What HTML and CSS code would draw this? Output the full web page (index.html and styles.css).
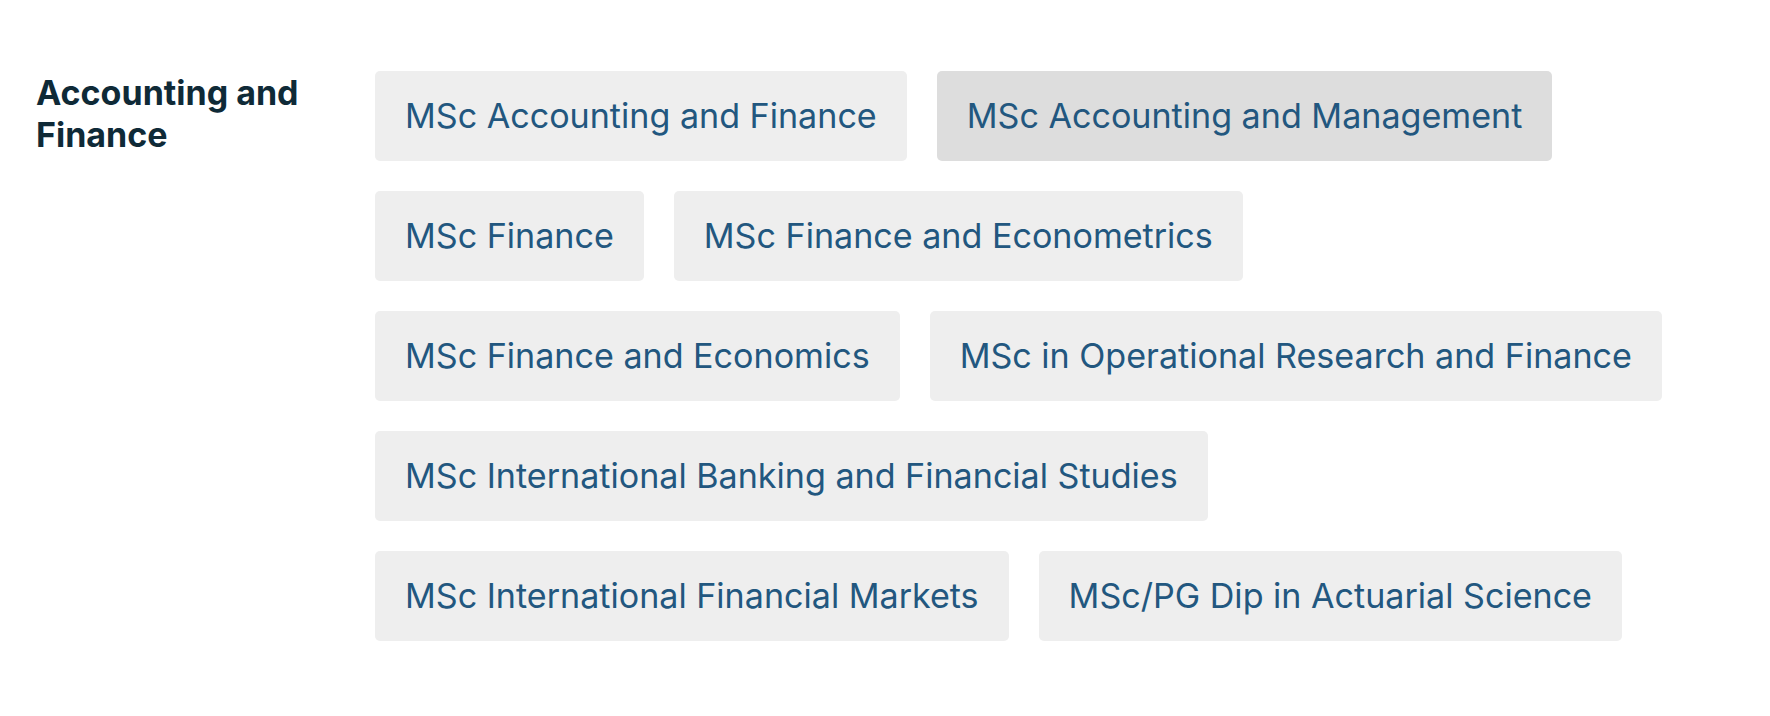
FILE: index.html
```html
<!DOCTYPE html>
<html lang="en">
<head>
<meta charset="utf-8">
<title>Accounting and Finance</title>
<link rel="stylesheet" href="styles.css">
</head>
<body>
<section class="subject">
  <h2 class="subject-title">Accounting and Finance</h2>
  <ul class="course-list">
    <li><a class="course" href="#">MSc Accounting and Finance</a></li>
    <li><a class="course course-active" href="#">MSc Accounting and Management</a></li>
    <li><a class="course" href="#">MSc Finance</a></li>
    <li><a class="course" href="#">MSc Finance and Econometrics</a></li>
    <li><a class="course" href="#">MSc Finance and Economics</a></li>
    <li><a class="course" href="#">MSc in Operational Research and Finance</a></li>
    <li><a class="course" href="#">MSc International Banking and Financial Studies</a></li>
    <li><a class="course" href="#">MSc International Financial Markets</a></li>
    <li><a class="course" href="#">MSc/PG Dip in Actuarial Science</a></li>
  </ul>
</section>
</body>
</html>
```
FILE: styles.css
```css
html, body {
  margin: 0;
  padding: 0;
  background: #ffffff;
}

body {
  font-family: Inter, "Liberation Sans", Arial, sans-serif;
}

.subject {
  display: flex;
  align-items: flex-start;
  padding: 71px 36px 0 36px;
}

.subject-title {
  width: 339px;
  flex: none;
  margin: 0;
  padding-top: 1px;
  font-size: 34px;
  line-height: 42px;
  font-weight: 700;
  color: #0f2a37;
}

.course-list {
  list-style: none;
  margin: 0;
  padding: 0;
  display: flex;
  flex-wrap: wrap;
  column-gap: 30px;
  row-gap: 30px;
  max-width: 1320px;
}

.course {
  display: block;
  padding: 25px 30px 25px 30px;
  font-size: 34.1px;
  line-height: 40px;
  color: #22577f;
  background: #eeeeee;
  border-radius: 5px;
  text-decoration: none;
}

.course-active {
  background: #dddddd;
}
```
